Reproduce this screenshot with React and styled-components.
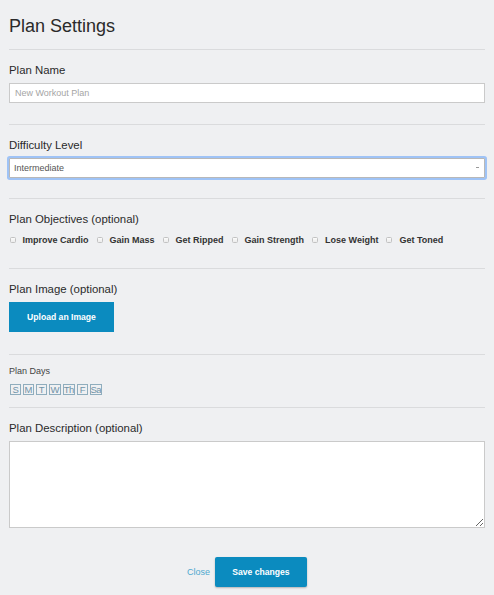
import React from "react";
import styled, { createGlobalStyle } from "styled-components";

const Global = createGlobalStyle`
  html, body { margin: 0; padding: 0; background: #eff0f2; }
  body { font-family: "Liberation Sans", Arial, Helvetica, sans-serif; color: #333; }
  * { box-sizing: border-box; }
`;

const Modal = styled.div`
  width: 494px;
  height: 595px;
  background: #eff0f2;
  padding: 0 9px;
  display: flex;
  flex-direction: column;
`;

const Header = styled.div`
  padding: 16px 0 13px;
  border-bottom: 1px solid #dadbdd;
`;

const Title = styled.h1`
  margin: 0;
  font-size: 18px;
  line-height: 20px;
  font-weight: normal;
  color: #2a2a2a;
`;

const Section = styled.div`
  padding: ${(p) => p.$top ?? 13}px 0 ${(p) => p.$bottom ?? 21}px;
  border-bottom: ${(p) => (p.$last ? "none" : "1px solid #dadbdd")};
`;

const Label = styled.div`
  font-size: ${(p) => (p.$small ? 9 : 11.4)}px;
  line-height: ${(p) => (p.$small ? 11 : 14)}px;
  color: ${(p) => (p.$small ? "#444" : "#2a2a2a")};
  margin-bottom: ${(p) => (p.$flush ? 0 : p.$small ? 7 : 6)}px;
`;

const TextInput = styled.input`
  display: block;
  width: 100%;
  height: 20px;
  border: 1px solid #cacaca;
  background: #fff;
  padding: 0 5px;
  font-family: inherit;
  font-size: 9px;
  color: #555;
  outline: none;
  &::placeholder { color: #a5a5a5; }
`;

const SelectWrap = styled.div`
  position: relative;
  height: 20px;
  &::after {
    content: "";
    position: absolute;
    right: 6px;
    top: 9px;
    width: 3px;
    height: 1px;
    background: #999;
  }
`;

const Select = styled.select`
  display: block;
  width: 100%;
  height: 20px;
  appearance: none;
  -webkit-appearance: none;
  border: 1px solid #b8b8b8;
  border-radius: 1px;
  box-shadow: 0 0 0 2px #9fc3f6;
  background: #fff;
  padding: 0 4px;
  font-family: inherit;
  font-size: 9px;
  color: #555;
  outline: none;
`;

const CheckRow = styled.div`
  display: flex;
  align-items: center;
  height: 13px;
  padding-left: 0.5px;
  margin-top: 7px;
`;

const CheckItem = styled.label`
  display: flex;
  align-items: center;
  margin-right: 8px;
  font-size: 9px;
  font-weight: bold;
  color: #333;
`;

const Box = styled.input`
  appearance: none;
  -webkit-appearance: none;
  width: 6px;
  height: 6px;
  margin: 1px 7px 0 0;
  border: 1px solid #c2c2c2;
  border-radius: 1.5px;
  background: linear-gradient(#fbfbfb, #ececec);
`;

const PrimaryButton = styled.button`
  display: block;
  height: ${(p) => p.$h}px;
  width: ${(p) => p.$w}px;
  border: none;
  border-radius: ${(p) => p.$r}px;
  background: #0b8bbf;
  color: #fff;
  font-family: inherit;
  font-size: 8.6px;
  font-weight: bold;
  padding: 0;
  box-shadow: ${(p) => (p.$shadow ? "0 1px 2px rgba(0,0,0,0.25)" : "none")};
`;

const Days = styled.div`
  display: flex;
  gap: 2.5px;
  height: 11px;
  padding-left: 1px;
`;

const Day = styled.span`
  display: flex;
  align-items: center;
  justify-content: center;
  width: ${(p) => (p.$wide ? 11.5 : 10.5)}px;
  height: 11px;
  border: 1px solid #8fadbd;
  color: #6f93a8;
  font-size: 9.5px;
  line-height: 1;
  letter-spacing: -0.6px;
  overflow: hidden;
`;

const TextArea = styled.textarea`
  display: block;
  width: 100%;
  height: 87px;
  border: 1px solid #cacaca;
  background: #fff;
  outline: none;
  resize: both;
`;

const Footer = styled.div`
  display: flex;
  justify-content: center;
  align-items: center;
  gap: 5px;
  padding-top: 29px;
`;

const LinkButton = styled.button`
  border: none;
  background: none;
  padding: 0;
  font-family: inherit;
  font-size: 9px;
  color: #4fa9cf;
`;

const objectives = ["Improve Cardio", "Gain Mass", "Get Ripped", "Gain Strength", "Lose Weight", "Get Toned"];
const days = [
  { d: "S" }, { d: "M" }, { d: "T" }, { d: "W", w: true }, { d: "Th", w: true }, { d: "F" }, { d: "Sa", w: true },
];

export default function App() {
  return (
    <>
      <Global />
      <Modal>
        <Header>
          <Title>Plan Settings</Title>
        </Header>
        <Section>
          <Label>Plan Name</Label>
          <TextInput placeholder="New Workout Plan" />
        </Section>
        <Section $bottom={20}>
          <Label>Difficulty Level</Label>
          <SelectWrap>
            <Select defaultValue="Intermediate">
              <option>Beginner</option>
              <option>Intermediate</option>
              <option>Advanced</option>
            </Select>
          </SelectWrap>
        </Section>
        <Section $bottom={22}>
          <Label $flush>Plan Objectives (optional)</Label>
          <CheckRow>
            {objectives.map((o) => (
              <CheckItem key={o}>
                <Box type="checkbox" />
                {o}
              </CheckItem>
            ))}
          </CheckRow>
        </Section>
        <Section $bottom={22}>
          <Label>Plan Image (optional)</Label>
          <PrimaryButton $w={105} $h={30} $r={0}>Upload an Image</PrimaryButton>
        </Section>
        <Section $top={11} $bottom={12}>
          <Label $small>Plan Days</Label>
          <Days>
            {days.map((x) => (
              <Day key={x.d} $wide={x.w}>{x.d}</Day>
            ))}
          </Days>
        </Section>
        <Section $last $bottom={0}>
          <Label>Plan Description (optional)</Label>
          <TextArea />
        </Section>
        <Footer>
          <LinkButton>Close</LinkButton>
          <PrimaryButton $w={92} $h={30} $r={2} $shadow>Save changes</PrimaryButton>
        </Footer>
      </Modal>
    </>
  );
}
